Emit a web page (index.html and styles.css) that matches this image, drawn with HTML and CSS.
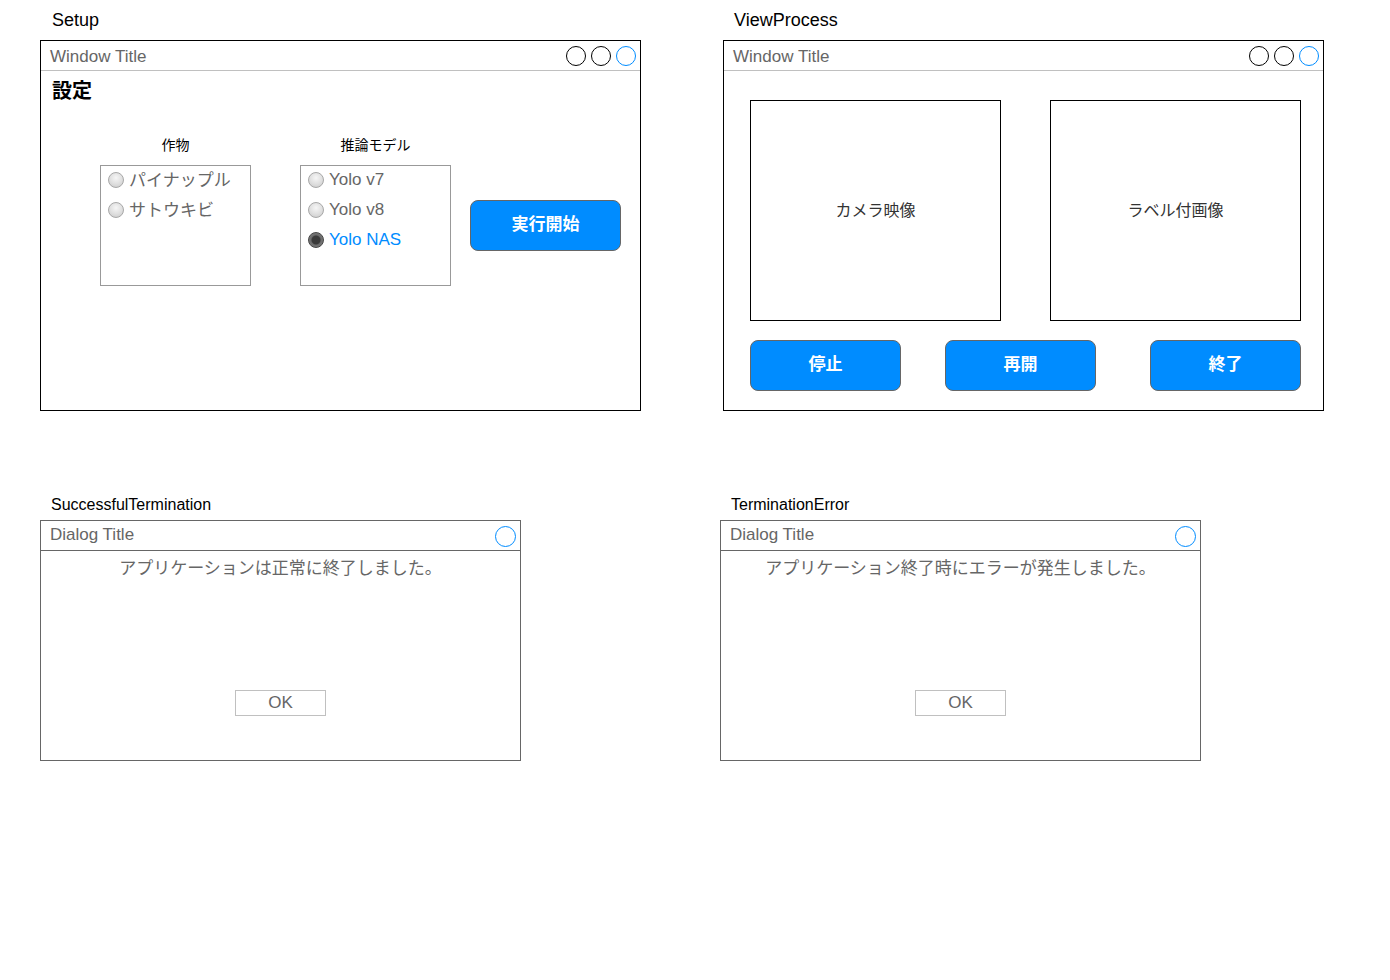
FILE: index.html
```html
<!DOCTYPE html>
<html lang="ja">
<head>
<meta charset="utf-8">
<title>Mockups</title>
<link rel="stylesheet" href="styles.css">
</head>
<body>
<div class="canvas">
  <div class="row row-top">
    <section class="panel">
      <div class="panel-label big">Setup</div>
      <div class="window">
        <div class="titlebar">
          <span class="title">Window Title</span>
          <span class="ctrls"><i class="dot"></i><i class="dot"></i><i class="dot blue"></i></span>
        </div>
        <div class="setup-body">
          <h1 class="heading">設定</h1>
          <div class="setup-row">
            <div class="group">
              <div class="group-label">作物</div>
              <div class="radio-box">
                <div class="radio"><i class="rb"></i><span>パイナップル</span></div>
                <div class="radio"><i class="rb"></i><span>サトウキビ</span></div>
              </div>
            </div>
            <div class="group">
              <div class="group-label">推論モデル</div>
              <div class="radio-box">
                <div class="radio latin"><i class="rb"></i><span>Yolo v7</span></div>
                <div class="radio latin"><i class="rb"></i><span>Yolo v8</span></div>
                <div class="radio latin on"><i class="rb"></i><span>Yolo NAS</span></div>
              </div>
            </div>
            <button class="btn start">実行開始</button>
          </div>
        </div>
      </div>
    </section>
    <section class="panel">
      <div class="panel-label big">ViewProcess</div>
      <div class="window">
        <div class="titlebar">
          <span class="title">Window Title</span>
          <span class="ctrls"><i class="dot"></i><i class="dot"></i><i class="dot blue"></i></span>
        </div>
        <div class="view-body">
          <div class="frames">
            <div class="frame">カメラ映像</div>
            <div class="frame">ラベル付画像</div>
          </div>
          <div class="btn-row">
            <button class="btn">停止</button>
            <button class="btn mid">再開</button>
            <button class="btn last">終了</button>
          </div>
        </div>
      </div>
    </section>
  </div>
  <div class="row row-bottom">
    <section class="panel">
      <div class="panel-label small">SuccessfulTermination</div>
      <div class="dialog">
        <div class="dlg-bar">
          <span class="title">Dialog Title</span>
          <i class="dot blue big-dot"></i>
        </div>
        <p class="msg">アプリケーションは正常に終了しました。</p>
        <button class="ok">OK</button>
      </div>
    </section>
    <section class="panel">
      <div class="panel-label small">TerminationError</div>
      <div class="dialog">
        <div class="dlg-bar">
          <span class="title">Dialog Title</span>
          <i class="dot blue big-dot"></i>
        </div>
        <p class="msg">アプリケーション終了時にエラーが発生しました。</p>
        <button class="ok">OK</button>
      </div>
    </section>
  </div>
</div>
</body>
</html>
```
FILE: styles.css
```css
* { box-sizing: border-box; }
html, body { margin: 0; padding: 0; background: #fff; }
body {
  font-family: "Liberation Sans", "Noto Sans CJK JP", sans-serif;
  color: #000;
  width: 1390px;
  height: 980px;
  overflow: hidden;
}
.canvas { display: flex; flex-direction: column; padding-left: 40px; }
.row { display: flex; }
.row-top { gap: 82px; }
.row-bottom { gap: 199px; margin-top: 79px; }
.panel { display: flex; flex-direction: column; }
.panel-label { padding-left: 12px; color: #000; white-space: nowrap; }
.panel-label.big { font-size: 18px; height: 40px; line-height: 40px; }
.row-top .panel + .panel .panel-label { padding-left: 11px; }
.panel-label.small { font-size: 16px; height: 30px; line-height: 30px; padding-left: 11px; }

/* Window */
.window {
  width: 601px;
  height: 371px;
  border: 1px solid #000;
  background: #fff;
  display: flex;
  flex-direction: column;
}
.titlebar {
  height: 30px;
  flex: none;
  border-bottom: 1px solid #c0c0c0;
  display: flex;
  align-items: center;
  justify-content: space-between;
  padding: 0 4px 0 9px;
}
.titlebar .title { margin-top: 2px; }
.title { font-size: 17px; color: #666; line-height: 20px; }
.ctrls { display: flex; gap: 5px; align-items: center; }
.dot {
  display: block;
  width: 20px;
  height: 20px;
  border: 1px solid #000;
  border-radius: 50%;
}
.dot.blue { border-color: #008cff; }

/* Setup */
.setup-body { padding: 0 0 0 11px; }
.heading {
  margin: 8px 0 0 0;
  font-size: 20px;
  line-height: 24px;
  font-weight: bold;
}
.setup-row {
  display: flex;
  align-items: flex-start;
  margin-top: 32px;
  padding-left: 48px;
}
.group { width: 151px; display: flex; flex-direction: column; }
.group + .group { margin-left: 49px; }
.group-label { font-size: 14px; line-height: 20px; height: 20px; text-align: center; }
.radio-box {
  margin-top: 10px;
  height: 121px;
  border: 1px solid #999;
  padding-left: 7px;
  display: flex;
  flex-direction: column;
  gap: 4px;
}
.radio {
  height: 26px;
  display: flex;
  align-items: center;
  gap: 5px;
  font-size: 17px;
  color: #666;
  white-space: nowrap;
}
.radio span { margin-top: -2px; }
.radio.latin span { margin-top: 1px; }
.radio .rb {
  width: 16px;
  height: 16px;
  flex: none;
  margin-top: 2px;
  border-radius: 50%;
  border: 1px solid #a8a8a8;
  background: radial-gradient(circle at 50% 35%, #f6f6f6 0%, #dedede 55%, #c8c8c8 100%);
}
.radio.on { color: #008cff; }
.radio.on .rb {
  border-color: #444;
  background: radial-gradient(circle, #3a3a3a 0 4px, #6a6a6a 5px, #8a8a8a 100%);
}

.btn {
  width: 151px;
  height: 51px;
  border: 1px solid #666;
  border-radius: 8px;
  background: #008cff;
  color: #fff;
  font-family: "Liberation Sans", "Noto Sans CJK JP", sans-serif;
  font-size: 17px;
  font-weight: bold;
  padding: 0 0 7px 0;
  cursor: pointer;
}
.btn.start { margin-left: 19px; margin-top: 65px; }

/* View process */
.view-body { padding: 29px 0 0 26px; }
.frames { display: flex; gap: 49px; }
.frame {
  width: 251px;
  height: 221px;
  border: 1px solid #000;
  display: flex;
  align-items: center;
  justify-content: center;
  padding-bottom: 4px;
  font-size: 16px;
  color: #333;
}
.btn-row { display: flex; gap: 44px; margin-top: 19px; }
.btn-row .btn.last { margin-left: 10px; }

/* Dialogs */
.dialog {
  width: 481px;
  height: 241px;
  border: 1px solid #666;
  display: flex;
  flex-direction: column;
  align-items: center;
}
.dlg-bar {
  width: 100%;
  height: 30px;
  border-bottom: 1px solid #666;
  display: flex;
  align-items: center;
  justify-content: space-between;
  padding: 0 4px 0 9px;
}
.dlg-bar .title { margin-top: -1px; }
.big-dot { width: 21px; height: 21px; margin-top: 1px; }
.msg {
  margin: 6px 0 0 0;
  font-size: 17px;
  line-height: 24px;
  color: #666;
  text-align: center;
}
.ok {
  margin-top: 109px;
  width: 91px;
  height: 26px;
  border: 1px solid #c0c0c0;
  background: #fff;
  color: #666;
  font-family: "Liberation Sans", sans-serif;
  font-size: 17px;
  padding: 0 0 0 0;
}
```
